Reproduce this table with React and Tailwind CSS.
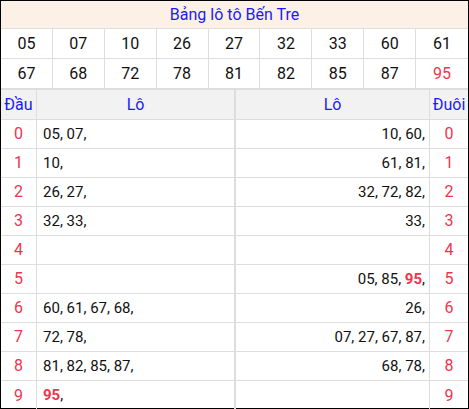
const nums = [
  ["05", "07", "10", "26", "27", "32", "33", "60", "61"],
  ["67", "68", "72", "78", "81", "82", "85", "87", "95"],
];

const rows = [
  [["05", "07"], ["10", "60"]],
  [["10"], ["61", "81"]],
  [["26", "27"], ["32", "72", "82"]],
  [["32", "33"], ["33"]],
  [[], []],
  [[], ["05", "85", "95"]],
  [["60", "61", "67", "68"], ["26"]],
  [["72", "78"], ["07", "27", "67", "87"]],
  [["81", "82", "85", "87"], ["68", "78"]],
  [["95"], []],
];

const Lo = ({ list }) => (
  <span>
    {list.map((n, i) => (
      <span key={i}>
        {i > 0 && " "}
        <span className={n === "95" ? "font-bold text-[#f0344c]" : ""}>{n}</span>,
      </span>
    ))}
  </span>
);

export default function App() {
  return (
    <div
      className="w-[469px] h-[409px] bg-white border border-black text-[#111]"
      style={{ fontFamily: "Roboto, sans-serif" }}
    >
      <div className="h-[28px] bg-[#fdf0e6] border-b border-[#ddd] flex items-center justify-center text-[16px] text-[#1a1aff]">
        Bảng lô tô Bến Tre
      </div>
      {nums.map((r, ri) => (
        <div key={ri} className="grid grid-cols-9 h-[30px] border-b border-[#ddd]">
          {r.map((n, i) => (
            <div
              key={i}
              className={`flex items-center justify-center text-[16px] ${i < 8 ? "border-r border-[#ddd]" : ""} ${
                ri === 1 && i === 8 ? "text-[#f0344c]" : ""
              }`}
            >
              {n}
            </div>
          ))}
        </div>
      ))}
      <div className="grid grid-cols-[36px_199px_194px_1fr] h-[31px] bg-[#f2f2f2] border-t border-b border-[#ddd] text-[16px] text-[#1a1aff]">
        <div className="flex items-center justify-center border-r border-[#ddd]">Đầu</div>
        <div className="flex items-center justify-center border-r-2 border-[#ddd]">Lô</div>
        <div className="flex items-center justify-center border-r border-[#ddd]">Lô</div>
        <div className="flex items-center justify-center">Đuôi</div>
      </div>
      {rows.map(([a, b], i) => (
        <div
          key={i}
          className={`grid grid-cols-[36px_199px_194px_1fr] h-[29px] text-[15px] ${i < 9 ? "border-b border-[#ddd]" : ""}`}
        >
          <div className="flex items-center justify-center border-r border-[#ddd] text-[16px] text-[#f0344c]">{i}</div>
          <div className="flex items-center pl-[6px] border-r-2 border-[#ddd]">
            <Lo list={a} />
          </div>
          <div className="flex items-center justify-end pr-[4px] border-r border-[#ddd]">
            <Lo list={b} />
          </div>
          <div className="flex items-center justify-center text-[16px] text-[#f0344c]">{i}</div>
        </div>
      ))}
    </div>
  );
}
